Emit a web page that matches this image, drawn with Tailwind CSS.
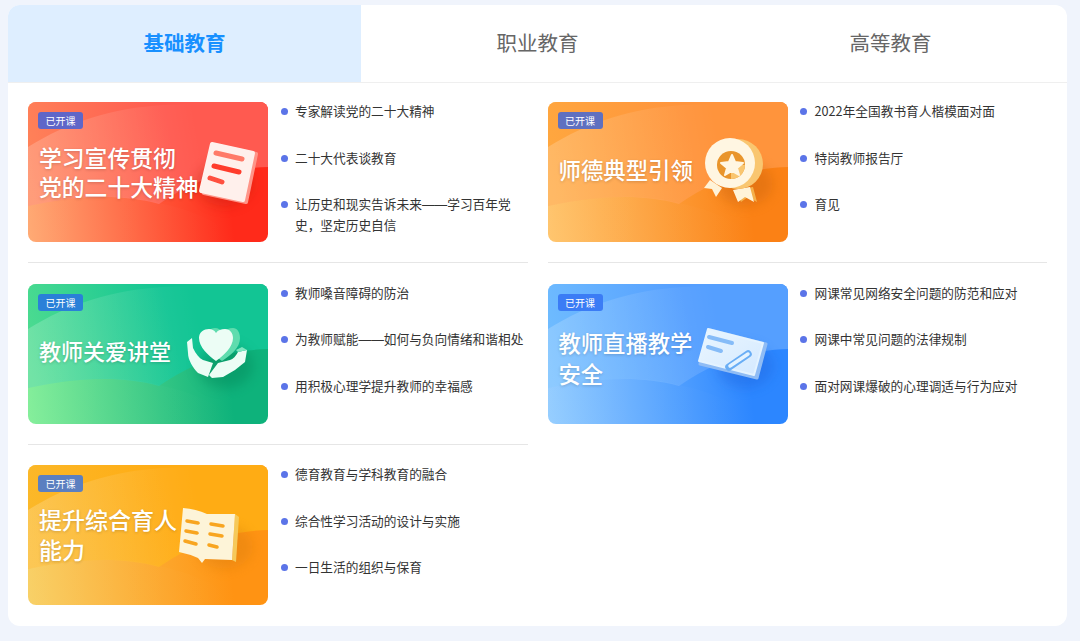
<!DOCTYPE html>
<html>
<head>
    <meta charset="utf-8">
    <title>教育课程</title>
    <script src="https://cdn.jsdelivr.net/npm/@tailwindcss/browser@4"></script>
</head>
<body class="bg-[#f0f4fc] font-['Noto_Sans_CJK_SC','Noto_Sans',sans-serif] overflow-hidden">
    <div class="h-[641px] pt-[5px] px-[8px]">
        <div class="w-[1059px] h-[621px] bg-white rounded-[12px] overflow-hidden">
            <div class="flex h-[78px] border-b border-[#efefef]">
                <div class="flex-1 flex items-center justify-center pb-[2px] bg-[#deeeff] text-[#1890ff] text-[20.5px] font-bold">基础教育</div>
                <div class="flex-1 flex items-center justify-center pb-[2px] text-[#666666] text-[20.5px]">职业教育</div>
                <div class="flex-1 flex items-center justify-center pb-[2px] text-[#666666] text-[20.5px]">高等教育</div>
            </div>
            <div id="grid" class="grid grid-cols-2 gap-x-[20px] px-[20px] pt-[19px]"></div>
        </div>
    </div>

    <script>
        const icons = {
            doc: `
                <polygon points="186,43 228,52 218,100 176,91" fill="#ff9488" stroke="#ff9488" stroke-width="4" stroke-linejoin="round"/>
                <polygon points="184,42 225,51 215,98 173,89" fill="#fff0ec" stroke="#fff0ec" stroke-width="4" stroke-linejoin="round"/>
                <g stroke-width="5" stroke-linecap="round" fill="none">
                    <path d="M188 51 L214 57" stroke="#ff7a68"/>
                    <path d="M186 64 L211 70" stroke="#ff3c2c"/>
                    <path d="M182 76 L194 80" stroke="#ff5040"/>
                </g>`,
            medal: `
                <polygon points="188,88 193,100 200,95 209,100 205,85" fill="#f5b04a"/>
                <polygon points="162,78 156,86 164,87 168,95 174,86" fill="#fff3d8"/>
                <polygon points="185,88 190,100 197,95 206,100 202,85" fill="#fff3d8"/>
                <circle cx="190" cy="62" r="25" fill="#f9c670"/>
                <circle cx="182" cy="61" r="25" fill="#fff6e2"/>
                <circle cx="183" cy="63" r="14" fill="#e9952c"/>
                <path d="M183 77 A14 14 0 0 0 197 63 L183 63Z" fill="#f9c670"/>
                <polygon points="184,53 187,60 195,61 189,66 191,73 184,69 177,73 179,66 173,61 181,60" fill="#fff6e2" stroke="#fff6e2" stroke-width="2" stroke-linejoin="round"/>`,
            hands: `
                <path d="M194 77 C186 71,177 63,177 54 C177 48,182 44,187 44 C190 44,193 46,195 48 C197 46,201 44,205 44 C209 44,212 48,212 54 C212 64,203 71,194 77Z" fill="#5fdcae"/>
                <path d="M188 77 C180 71,171 63,171 54 C171 48,176 45,181 45 C184 45,186 46,188 49 C190 46,193 45,197 45 C202 45,205 49,205 54 C205 63,196 71,188 77Z" fill="#ecfdf5"/>
                <path d="M159 58 L164 54 L165 64 C168 70,171 74,175 76 L185 79 L180 93 L170 89 C165 84,160 76,160 69Z" fill="#ecfdf5"/>
                <path d="M219 66 L210 68 C208 72,205 75,202 76 L190 79 L181 91 L184 94 L195 93 L207 86 L217 78Z" fill="#ecfdf5"/>
                <path d="M219 66 L214 63 L208 66 L210 68Z" fill="#7fe6c0"/>`,
            card: `
                <polygon points="162,46 218,60 209,94 152,80" fill="#8fbcf5" stroke="#8fbcf5" stroke-width="3" stroke-linejoin="round"/>
                <polygon points="160,45 215,59 206,91 151,77" fill="url(#face-blue)" stroke="#e4f3ff" stroke-width="2" stroke-linejoin="round"/>
                <g stroke-linecap="round" fill="none">
                    <path d="M161 53 L184 59" stroke="#86bcf8" stroke-width="4"/>
                    <path d="M160 63 L173 67" stroke="#86bcf8" stroke-width="4"/>
                    <path d="M181 83 L200 70" stroke="#6aaef5" stroke-width="7.5"/>
                    <path d="M182 82 L200 70" stroke="#e4f3ff" stroke-width="3.5"/>
                </g>`,
            book: `
                <path d="M207 49 L211 52 L208 97 L204 95Z" fill="#f6c95a"/>
                <path d="M155 43 Q168 44 179 49 L207 49 L204 95 L177 94 L174 98 L170 93 Q161 89 151 87Z" fill="#fdf4d8"/>
                <g stroke="#f8a520" stroke-width="3.5" stroke-linecap="round" fill="none">
                    <path d="M159 56 L170 58"/>
                    <path d="M158 66 L169 68"/>
                    <path d="M157 76 L168 79"/>
                    <path d="M183 59 L195 61"/>
                    <path d="M182 69 L194 71"/>
                    <path d="M181 80 L189 82"/>
                </g>`
        };

        const dash = `<span class="font-['Liberation_Sans',sans-serif]">——</span>`;

        const courses = [
            { id: 'red', low: '#ffa76e', high: '#ff2a1a', topL: '#ff8459', topR: '#ff5a50', icon: icons.doc, shadow: '#b81a0c',
              badge: 'bg-[#5f66c8]', title: '学习宣传贯彻<br>党的二十大精神', titleBox: 'pb-[0px]', titleText: 'text-[22.8px] leading-[29px]', row: 'border-b border-[#e6e6e6] pb-[20px] mb-[20.5px]',
              items: ['专家解读党的二十大精神', '二十大代表谈教育', `让历史和现实告诉未来${dash}学习百年党史，坚定历史自信`] },
            { id: 'orange', low: '#ffc368', high: '#fb8115', topL: '#ffa83f', topR: '#ff943c', icon: icons.medal, shadow: '#c2610a',
              badge: 'bg-[#5f70c0]', title: '师德典型引领', titleBox: 'pb-[6px]', titleText: 'text-[22.4px] leading-[30px]', row: 'border-b border-[#e6e6e6] pb-[20px] mb-[20.5px]',
              items: ['2022年全国教书育人楷模面对面', '特岗教师报告厅', '育见'] },
            { id: 'green', low: '#80ee96', high: '#0eb27b', topL: '#4fdc90', topR: '#12c594', icon: icons.hands, shadow: '#067a50',
              badge: 'bg-[#2a80d8]', title: '教师关爱讲堂', titleBox: 'pb-[8px]', titleText: 'text-[22px] leading-[30px]', row: 'border-b border-[#e6e6e6] pb-[20px] mb-[20.5px]',
              items: ['教师嗓音障碍的防治', `为教师赋能${dash}如何与负向情绪和谐相处`, '用积极心理学提升教师的幸福感'] },
            { id: 'blue', low: '#92ccff', high: '#2c86ff', topL: '#70bdff', topR: '#559fff', icon: icons.card, shadow: '#1a5fd8',
              badge: 'bg-[#3b7cf5]', title: '教师直播教学<br>安全', titleBox: 'pt-[9px]', titleText: 'text-[22.3px] leading-[31px]', row: '',
              items: ['网课常见网络安全问题的防范和应对', '网课中常见问题的法律规制', '面对网课爆破的心理调适与行为应对'] },
            { id: 'yellow', low: '#f8cf60', high: '#ff9313', topL: '#fbb92a', topR: '#ffac14', icon: icons.book, shadow: '#d47a08',
              badge: 'bg-[#5b7fc0]', title: '提升综合育人<br>能力', titleBox: 'pb-[2px]', titleText: 'text-[23px] leading-[30px]', row: '',
              items: ['德育教育与学科教育的融合', '综合性学习活动的设计与实施', '一日生活的组织与保育'] }
        ];

        function banner(c) {
            return `
                <svg class="absolute inset-0" width="240" height="140" viewBox="0 0 240 140">
                    <defs>
                        <linearGradient id="base-${c.id}" gradientUnits="userSpaceOnUse" x1="0" y1="140" x2="240" y2="110">
                            <stop offset="0" stop-color="${c.low}"/><stop offset="0.85" stop-color="${c.high}"/>
                        </linearGradient>
                        <linearGradient id="top-${c.id}" gradientUnits="userSpaceOnUse" x1="0" y1="80" x2="240" y2="20">
                            <stop offset="0" stop-color="${c.topL}"/><stop offset="0.6" stop-color="${c.topR}"/>
                        </linearGradient>
                        <linearGradient id="fade-${c.id}" gradientUnits="userSpaceOnUse" x1="0" y1="60" x2="170" y2="30">
                            <stop offset="0" stop-color="#fff" stop-opacity="0.2"/><stop offset="1" stop-color="#fff" stop-opacity="0"/>
                        </linearGradient>
                        <linearGradient id="wave-${c.id}" gradientUnits="userSpaceOnUse" x1="0" y1="120" x2="200" y2="120">
                            <stop offset="0" stop-color="#fff" stop-opacity="0.05"/><stop offset="1" stop-color="#fff" stop-opacity="0"/>
                        </linearGradient>
                        <linearGradient id="face-${c.id}" x1="0" y1="0" x2="1" y2="1">
                            <stop offset="0" stop-color="#eaf6ff"/><stop offset="1" stop-color="#d4e9ff"/>
                        </linearGradient>
                        <filter id="blur-${c.id}" x="-50%" y="-50%" width="200%" height="200%"><feGaussianBlur stdDeviation="6"/></filter>
                    </defs>
                    <rect width="240" height="140" fill="url(#base-${c.id})"/>
                    <path d="M0 0 H240 V65 C195 66 160 82 131 102 C90 90 40 95 0 104Z" fill="url(#top-${c.id})"/>
                    <path d="M0 45 C40 20 85 6 135 3 C170 2 200 3 240 3 V65 C195 66 160 82 131 102 C90 90 40 95 0 104Z" fill="url(#fade-${c.id})"/>
                    <path d="M0 104 C40 95 90 90 131 101 C165 108 195 122 215 140 H0Z" fill="url(#wave-${c.id})"/>
                    <ellipse cx="197" cy="82" rx="28" ry="22" fill="${c.shadow}" opacity="0.35" filter="url(#blur-${c.id})"/>
                    ${c.icon}
                </svg>`;
        }

        document.getElementById('grid').innerHTML = courses.map(c => `
            <div class="flex ${c.row}">
                <div class="relative w-[240px] h-[140px] shrink-0 rounded-[8px] overflow-hidden">
                    ${banner(c)}
                    <div class="absolute left-[10px] top-[10px] w-[45px] h-[17px] rounded-[3px] flex items-center justify-center text-white text-[10px] ${c.badge}">已开课</div>
                    <div class="absolute inset-0 flex items-center pl-[11px] ${c.titleBox}">
                        <div class="text-white font-medium ${c.titleText} [text-shadow:0_1px_3px_rgba(0,0,0,0.18)]">${c.title}</div>
                    </div>
                </div>
                <ul class="flex-1 pl-[12.5px] -mt-[1px]">
                    ${c.items.map(t => `
                        <li class="flex h-[46.67px] text-[12.7px] leading-[20px] text-[#333333]">
                            <span class="w-[7px] h-[7px] mt-[7px] mr-[7.5px] shrink-0 rounded-full bg-[#5b74e8]"></span>
                            <span>${t}</span>
                        </li>`).join('')}
                </ul>
            </div>`).join('');
    </script>
</body>
</html>
